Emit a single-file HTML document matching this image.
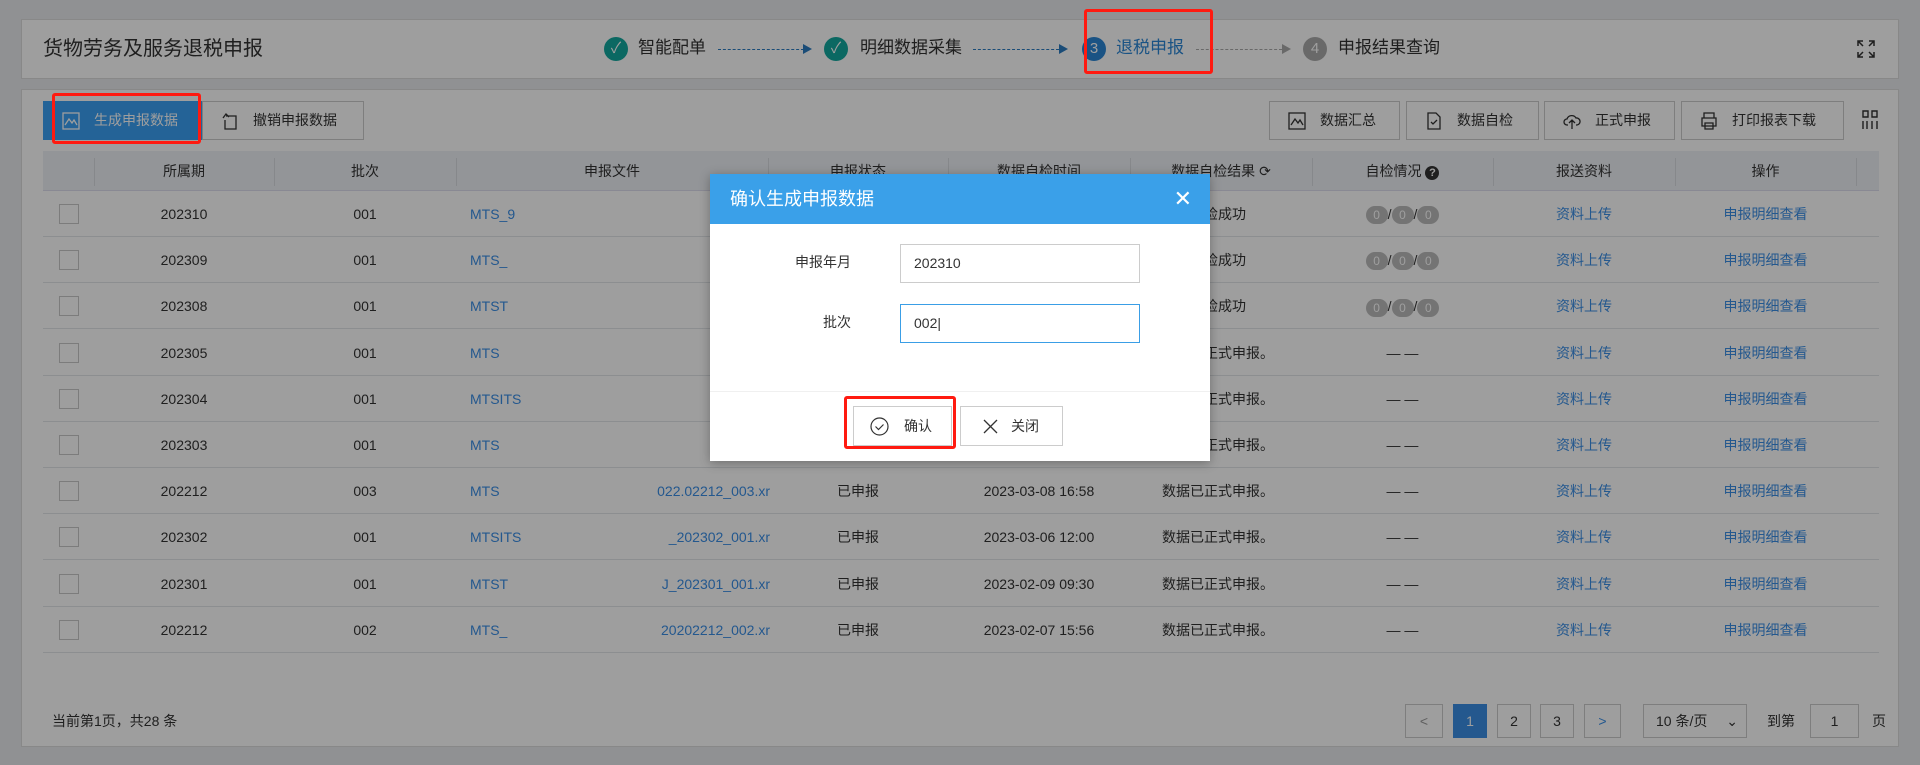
<!DOCTYPE html>
<html><head><meta charset="utf-8"><style>
*{box-sizing:border-box;margin:0;padding:0}
body{width:1920px;height:765px;background:#e8eaee;font-family:"Liberation Sans","Noto Sans CJK SC",sans-serif;font-size:14px;color:#333;position:relative;overflow:hidden}
.abs{position:absolute}
.panel{position:absolute;background:#fff;border:1px solid #dcdcdc}
.step{position:absolute;top:36px;font-size:17px;color:#333;line-height:24px}
.circ{position:absolute;top:37px;width:24px;height:24px;border-radius:50%;color:#fff;text-align:center;line-height:24px;font-size:15px}
.dot{position:absolute;top:49px;border-top:1px dashed #2a7bc0;height:0}
.tri{position:absolute;top:44px;width:0;height:0;border-left:9px solid #2a7bc0;border-top:5px solid transparent;border-bottom:5px solid transparent}
.btn{position:absolute;top:101px;height:39px;border:1px solid #ccc;background:#fff;font-size:14px;line-height:37px;color:#333;padding-left:50px}
.btn svg{position:absolute;left:18px;top:10px}
.hdr{position:absolute;left:43px;top:151px;width:1836px;height:40px;background:#eef1f6;border-bottom:1px solid #dde}
.th{position:absolute;top:151px;height:40px;line-height:40px;text-align:center;font-size:14px;color:#333}
.sep{position:absolute;top:158px;height:28px;border-left:1px solid #d8dbe0}
.row{position:absolute;left:43px;width:1836px;height:46px;border-bottom:1px solid #e3e5e9}
.td{position:absolute;text-align:center;font-size:14px;line-height:20px}
.cb{position:absolute;left:59px;width:20px;height:20px;border:1px solid #c8c8c8;background:#fff}
.lnk{color:#3a8ee6}
.pill{display:inline-block;width:22px;height:18px;border-radius:9px;background:#bbb;color:#fff;font-size:12px;line-height:18px;vertical-align:middle}
.pg{position:absolute;top:704px;height:34px;border:1px solid #ccc;background:#fff;text-align:center;line-height:32px;font-size:14px}
#ov{position:absolute;left:0;top:0;width:1920px;height:765px;background:rgba(0,0,0,0.38)}
.red{position:absolute;border:3px solid #ff1a10;border-radius:3px}
</style></head><body>

<div class="panel" style="left:21px;top:19px;width:1878px;height:60px"></div>
<div class="abs" style="left:43px;top:36px;font-size:20px;color:#333;line-height:26px">货物劳务及服务退税申报</div>

<div class="circ" style="left:604px;background:#13a89e">✓</div>
<div class="step" style="left:638px">智能配单</div>
<div class="dot" style="left:718px;width:86px"></div><div class="tri" style="left:803px"></div>
<div class="circ" style="left:824px;background:#13a89e">✓</div>
<div class="step" style="left:860px">明细数据采集</div>
<div class="dot" style="left:973px;width:86px"></div><div class="tri" style="left:1059px"></div>
<div class="circ" style="left:1082px;background:#2a86d6">3</div>
<div class="step" style="left:1116px;color:#2a86d6">退税申报</div>
<div class="dot" style="left:1196px;width:86px;border-color:#aaa"></div><div class="tri" style="left:1282px;border-left-color:#aaa"></div>
<div class="circ" style="left:1303px;background:#aaa">4</div>
<div class="step" style="left:1338px">申报结果查询</div>
<svg class="abs" style="left:1856px;top:39px" width="20" height="20" viewBox="0 0 20 20" fill="none" stroke="#333" stroke-width="1.5"><path d="M2 7V2h5M2 2l5 5M18 7V2h-5M18 2l-5 5M2 13v5h5M2 18l5-5M18 13v5h-5M18 18l-5-5"/></svg>

<div class="panel" style="left:21px;top:89px;width:1878px;height:658px"></div>

<div class="btn" style="left:43px;width:159px;background:#3aa0f4;color:#fff;border-color:#3aa0f4"><svg width="18" height="18" viewBox="0 0 18 18" fill="none" stroke="#fff" stroke-width="1.3"><rect x="1" y="1" width="16" height="16"/><path d="M3 13l4-6 3 4 2-3 3 5"/></svg>生成申报数据</div>
<div class="btn" style="left:202px;width:162px"><svg width="18" height="18" viewBox="0 0 18 18" fill="none" stroke="#333" stroke-width="1.3"><path d="M5 4h10v13H4V8M2 6l3-4 3 3"/></svg>撤销申报数据</div>

<div class="btn" style="left:1269px;width:131px"><svg width="18" height="18" viewBox="0 0 18 18" fill="none" stroke="#333" stroke-width="1.3"><rect x="1" y="1" width="16" height="16"/><path d="M3 13l4-6 3 4 2-3 3 5"/></svg>数据汇总</div>
<div class="btn" style="left:1406px;width:133px"><svg width="18" height="18" viewBox="0 0 18 18" fill="none" stroke="#333" stroke-width="1.3"><path d="M3 1h8l4 4v12H3zM6 10l2 2 4-4"/></svg>数据自检</div>
<div class="btn" style="left:1544px;width:131px"><svg width="18" height="18" viewBox="0 0 18 18" fill="none" stroke="#333" stroke-width="1.3"><path d="M5 13H4a3 3 0 010-6 5 5 0 019-1 3.5 3.5 0 011 7h-1M9 17V8M6 11l3-3 3 3"/></svg>正式申报</div>
<div class="btn" style="left:1681px;width:163px"><svg width="18" height="18" viewBox="0 0 18 18" fill="none" stroke="#333" stroke-width="1.3"><path d="M4 6V1h10v5M2 6h14v8H2zM5 11h8v6H5z"/></svg>打印报表下载</div>
<svg class="abs" style="left:1862px;top:110px" width="16" height="20" viewBox="0 0 16 20" fill="none" stroke="#333" stroke-width="1.4"><path d="M1 1h5v6H1zM10 1h5v6h-5zM1 11v8M5 11v8M10 11v8M15 11v8"/></svg>

<div class="hdr"></div>
<div class="sep" style="left:94px"></div><div class="sep" style="left:274px"></div><div class="sep" style="left:456px"></div><div class="sep" style="left:768px"></div><div class="sep" style="left:948px"></div><div class="sep" style="left:1130px"></div><div class="sep" style="left:1312px"></div><div class="sep" style="left:1493px"></div><div class="sep" style="left:1675px"></div><div class="sep" style="left:1856px"></div>
<div class="th" style="left:94px;width:180px">所属期</div>
<div class="th" style="left:274px;width:182px">批次</div>
<div class="th" style="left:456px;width:312px">申报文件</div>
<div class="th" style="left:768px;width:180px">申报状态</div>
<div class="th" style="left:948px;width:182px">数据自检时间</div>
<div class="th" style="left:1130px;width:182px">数据自检结果 ⟳</div>
<div class="th" style="left:1312px;width:181px">自检情况 <span style="display:inline-block;width:14px;height:14px;border-radius:50%;background:#333;color:#fff;font-size:11px;line-height:14px;font-weight:bold">?</span></div>
<div class="th" style="left:1493px;width:182px">报送资料</div>
<div class="th" style="left:1675px;width:181px">操作</div>

<div id="rows"></div>
<script>
var d=[["202310","001","MTS_9","020231","自","2023-10-10 10:10","数据自检成功",1],
["202309","001","MTS_","020230","自","2023-09-10 10:10","数据自检成功",1],
["202308","001","MTST","202308","自","2023-08-10 10:10","数据自检成功",1],
["202305","001","MTS","020230","已申报","2023-05-10 10:10","数据已正式申报。",0],
["202304","001","MTSITS","020230","已申报","2023-04-10 10:10","数据已正式申报。",0],
["202303","001","MTS","020230","已申报","2023-03-10 10:10","数据已正式申报。",0],
["202212","003","MTS","022.02212_003.xr","已申报","2023-03-08 16:58","数据已正式申报。",0],
["202302","001","MTSITS","_202302_001.xr","已申报","2023-03-06 12:00","数据已正式申报。",0],
["202301","001","MTST","J_202301_001.xr","已申报","2023-02-09 09:30","数据已正式申报。",0],
["202212","002","MTS_","20202212_002.xr","已申报","2023-02-07 15:56","数据已正式申报。",0]];
var h="";
for(var i=0;i<10;i++){var r=d[i],t=191+i*46.2,y=t+13;
h+='<div class="row" style="top:'+t+'px"></div>';
h+='<div class="cb" style="top:'+(y)+'px"></div>';
h+='<div class="td" style="left:94px;width:180px;top:'+y+'px">'+r[0]+'</div>';
h+='<div class="td" style="left:274px;width:182px;top:'+y+'px">'+r[1]+'</div>';
h+='<div class="td lnk" style="left:470px;top:'+y+'px;text-align:left">'+r[2]+'</div>';
h+='<div class="td lnk" style="left:640px;width:130px;top:'+y+'px;text-align:right;overflow:hidden;white-space:nowrap">'+r[3]+'</div>';
h+='<div class="td" style="left:768px;width:180px;top:'+y+'px">'+(r[4]=="自"?"自检成功":r[4])+'</div>';
h+='<div class="td" style="left:948px;width:182px;top:'+y+'px">'+r[5]+'</div>';
h+='<div class="td" style="left:1162px;top:'+y+'px;text-align:left">'+r[6]+'</div>';
h+='<div class="td" style="left:1312px;width:181px;top:'+y+'px">'+(r[7]?'<span class="pill">0</span>/<span class="pill">0</span>/<span class="pill">0</span>':'— —')+'</div>';
h+='<div class="td lnk" style="left:1493px;width:182px;top:'+y+'px">资料上传</div>';
h+='<div class="td lnk" style="left:1675px;width:181px;top:'+y+'px">申报明细查看</div>';}
document.getElementById("rows").innerHTML=h;
</script>

<div class="abs" style="left:52px;top:711px;font-size:14px">当前第1页，共28 条</div>
<div class="pg" style="left:1405px;width:38px;color:#999">&lt;</div>
<div class="pg" style="left:1453px;width:34px;background:#3a8ee6;border-color:#3a8ee6;color:#fff">1</div>
<div class="pg" style="left:1497px;width:34px">2</div>
<div class="pg" style="left:1540px;width:34px">3</div>
<div class="pg" style="left:1584px;width:37px;color:#3a8ee6">&gt;</div>
<div class="pg" style="left:1643px;width:104px;text-align:left;padding-left:12px">10 条/页 <span style="position:absolute;right:8px">⌄</span></div>
<div class="abs" style="left:1767px;top:711px">到第</div>
<div class="pg" style="left:1810px;width:49px">1</div>
<div class="abs" style="left:1872px;top:711px">页</div>

<div id="ov"></div>
<div class="red" style="left:52px;top:93px;width:149px;height:51px"></div>
<div class="red" style="left:1084px;top:9px;width:129px;height:65px"></div>

<div class="abs" style="left:710px;top:174px;width:500px;height:287px;background:#fff;box-shadow:0 2px 10px rgba(0,0,0,.3)">
 <div style="height:50px;background:#3aa0e9;color:#fff;font-size:18px;line-height:50px;padding-left:20px">确认生成申报数据<span style="position:absolute;right:18px;top:0;font-size:22px">✕</span></div>
 <div class="abs" style="left:0;top:78px;width:141px;text-align:right;font-size:14px">申报年月</div>
 <div class="abs" style="left:190px;top:70px;width:240px;height:39px;border:1px solid #ccc;padding-left:13px;line-height:37px;font-size:14px">202310</div>
 <div class="abs" style="left:0;top:138px;width:141px;text-align:right;font-size:14px">批次</div>
 <div class="abs" style="left:190px;top:130px;width:240px;height:39px;border:1px solid #3a9ee6;padding-left:13px;line-height:37px;font-size:14px">002|</div>
 <div class="abs" style="left:0;top:217px;width:500px;height:70px;border-top:1px solid #f0f0f0;background:#fff"></div>
 <div class="abs" style="left:143px;top:232px;width:99px;height:40px;border:1px solid #ccc;line-height:38px;font-size:14px;padding-left:50px"><svg class="abs" style="left:16px;top:10px" width="19" height="19" viewBox="0 0 19 19" fill="none" stroke="#333" stroke-width="1.2"><circle cx="9.5" cy="9.5" r="8.5"/><path d="M5.5 9.5l3 3 5-5"/></svg>确认</div>
 <div class="abs" style="left:250px;top:232px;width:103px;height:40px;border:1px solid #ccc;line-height:38px;font-size:14px;padding-left:50px"><svg class="abs" style="left:22px;top:12px" width="15" height="15" viewBox="0 0 15 15" stroke="#333" stroke-width="1.3"><path d="M1 1l13 13M14 1L1 14"/></svg>关闭</div>
</div>
<div class="red" style="left:844px;top:396px;width:112px;height:53px"></div>
</body></html>
